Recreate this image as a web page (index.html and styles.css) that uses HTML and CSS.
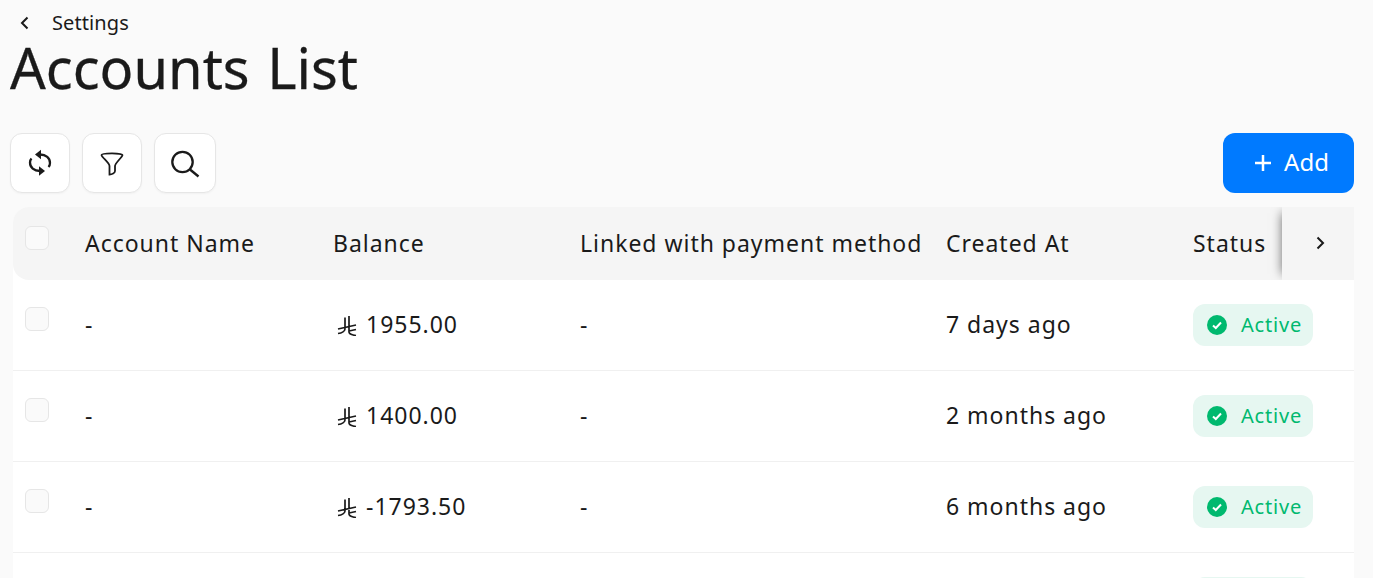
FILE: index.html
```html
<!DOCTYPE html>
<html lang="en">
<head>
  <meta charset="UTF-8" />
  <title>Accounts List</title>
  <link rel="stylesheet" href="styles.css">
</head>
<body>
  <div class="page">
    <a href="#" class="back">
      <svg class="back-icon" width="12" height="14" viewBox="0 0 12 14"><path d="M8.500 1.500 3 7l5.500 5.500" /></svg>
      <span>Settings</span>
    </a>
    <h1>Accounts List</h1>

    <div class="toolbar">
      <button class="btn-icon" aria-label="Refresh">
        <svg width="26" height="28" viewBox="0 0 26 28">
          <path class="ic" d="M13 5.500C19 5.500 23 9 23 14C23 15.500 22.500 17 21.500 18" />
          <path class="ic-fill" d="M8 5.500 14 .8V10.200Z" />
          <path class="ic" d="M13 22C7 22 3 18.500 3 13.500C3 12 3.500 10.500 4.500 9.500" />
          <path class="ic-fill" d="M18 22 12 17.300V26.700Z" />
        </svg>
      </button>
      <button class="btn-icon" aria-label="Filter">
        <svg width="26" height="28" viewBox="0 0 26 28">
          <path class="ic-thin" d="M2.500 6C2.500 3.800 23.500 3.800 23.500 6C23.500 8 16 14 16 17V22C16 24 13 25.500 10.500 25.500V17C10.500 14 2.500 8 2.500 6Z" />
        </svg>
      </button>
      <button class="btn-icon btn-wide" aria-label="Search">
        <svg width="30" height="30" viewBox="0 0 30 30">
          <circle class="ic" cx="12.500" cy="14" r="10.200" />
          <path class="ic" d="M20 21.500 28.500 28.500" />
        </svg>
      </button>
      <button class="btn-add">
        <svg width="18" height="18" viewBox="0 0 18 18"><path d="M9 1v16M1 9h16" /></svg>
        <span>Add</span>
      </button>
    </div>

    <div class="table-wrap">
      <table>
        <colgroup>
          <col class="col-check" />
          <col class="col-name" />
          <col class="col-std" />
          <col class="col-linked" />
          <col class="col-std" />
          <col />
        </colgroup>
        <thead>
          <tr>
            <th><span class="check"></span></th>
            <th>Account Name</th>
            <th>Balance</th>
            <th>Linked with payment method</th>
            <th>Created At</th>
            <th>Status</th>
          </tr>
        </thead>
        <tbody>
          <tr>
            <td><span class="check"></span></td>
            <td>-</td>
            <td><svg class="riyal" width="20" height="20" viewBox="0 0 20 20"><path d="M8 1.500V13C8 15 5 17 1 17.500M12 0V16C12 18 15 19 19 19.500M1 13 19 9M12 15 19 13.500" /></svg>1955.00</td>
            <td>-</td>
            <td>7 days ago</td>
            <td><span class="badge"><svg width="20" height="20" viewBox="0 0 20 20"><circle cx="10" cy="10" r="10" /><path d="M6 10.500 8.800 13 14 7.500" /></svg><span>Active</span></span></td>
          </tr>
          <tr>
            <td><span class="check"></span></td>
            <td>-</td>
            <td><svg class="riyal" width="20" height="20" viewBox="0 0 20 20"><path d="M8 1.500V13C8 15 5 17 1 17.500M12 0V16C12 18 15 19 19 19.500M1 13 19 9M12 15 19 13.500" /></svg>1400.00</td>
            <td>-</td>
            <td>2 months ago</td>
            <td><span class="badge"><svg width="20" height="20" viewBox="0 0 20 20"><circle cx="10" cy="10" r="10" /><path d="M6 10.500 8.800 13 14 7.500" /></svg><span>Active</span></span></td>
          </tr>
          <tr>
            <td><span class="check"></span></td>
            <td>-</td>
            <td><svg class="riyal" width="20" height="20" viewBox="0 0 20 20"><path d="M8 1.500V13C8 15 5 17 1 17.500M12 0V16C12 18 15 19 19 19.500M1 13 19 9M12 15 19 13.500" /></svg>-1793.50</td>
            <td>-</td>
            <td>6 months ago</td>
            <td><span class="badge"><svg width="20" height="20" viewBox="0 0 20 20"><circle cx="10" cy="10" r="10" /><path d="M6 10.500 8.800 13 14 7.500" /></svg><span>Active</span></span></td>
          </tr>
          <tr>
            <td><span class="check"></span></td>
            <td></td>
            <td></td>
            <td></td>
            <td></td>
            <td><span class="badge"></span></td>
          </tr>
        </tbody>
      </table>
      <button class="scroll-next" aria-label="Next">
        <svg width="12" height="14" viewBox="0 0 12 14"><path d="M3.500 1.500 9 7l-5.500 5.500" /></svg>
      </button>
    </div>
  </div>
</body>
</html>
```

FILE: styles.css
```css
html, body {
  margin: 0;
  height: 100%;
  overflow: hidden;
}
body {
  background: #fafafa;
  font-family: "Noto Sans", sans-serif;
  color: #1a1a1a;
}
.page {
  height: 100vh;
  box-sizing: border-box;
  overflow: hidden;
  padding: 10px 19px 0 10px;
}
.back {
  display: flex;
  align-items: center;
  gap: 21px;
  padding-left: 9px;
  height: 25px;
  font-size: 20px;
  letter-spacing: 0.1px;
  color: #1a1a1a;
  text-decoration: none;
}
.back-icon path, .scroll-next path {
  fill: none;
  stroke: #1a1a1a;
  stroke-width: 2;
}
h1 {
  margin: 0;
  font-size: 56px;
  font-weight: 400;
  line-height: 64px;
  word-spacing: 3px;
  -webkit-text-stroke: 0.3px #1a1a1a;
}
.toolbar {
  display: flex;
  gap: 12px;
  margin-top: 34px;
}
.btn-icon {
  width: 60px;
  height: 60px;
  padding: 0;
  display: flex;
  align-items: center;
  justify-content: center;
  background: #fff;
  border: 1px solid #e6e6e6;
  border-radius: 12px;
  box-shadow: 0 1px 2px rgba(0, 0, 0, 0.04);
}
.btn-wide {
  width: 62px;
}
.ic, .ic-thin {
  fill: none;
  stroke: #1a1a1a;
  stroke-width: 2.300;
}
.ic-thin {
  stroke-width: 1.800;
}
.ic-fill {
  fill: #1a1a1a;
}
.btn-add {
  margin-left: auto;
  width: 131px;
  height: 60px;
  padding: 0 0 0 6px;
  display: flex;
  align-items: center;
  justify-content: center;
  gap: 12px;
  background: #007aff;
  border: none;
  border-radius: 12px;
  color: #fff;
  font-family: "Noto Sans", sans-serif;
  font-size: 24px;
}
.btn-add span {
  margin-bottom: 3px;
}
.btn-add path {
  stroke: #fff;
  stroke-width: 2.500;
}
.table-wrap {
  position: relative;
  margin: 14px 0 0 3px;
  background: #fff;
  border-top-left-radius: 16px;
}
table {
  width: 100%;
  border-collapse: collapse;
  table-layout: fixed;
  font-size: 23px;
  letter-spacing: 0.98px;
}
.col-check { width: 72px; }
.col-name { width: 248px; }
.col-std { width: 247px; }
.col-linked { width: 366px; }
th {
  height: 71px;
  padding: 0 0 2px;
  background: #f5f5f5;
  font-weight: 400;
  text-align: left;
  white-space: nowrap;
}
th:first-child {
  border-radius: 16px 0 0 16px;
}
td {
  height: 88px;
  padding: 0 0 2px;
  border-bottom: 1px solid #f0f0f0;
}
th:first-child, td:first-child {
  padding-left: 12px;
  vertical-align: top;
}
td:last-child {
  padding-bottom: 0;
  height: 90px;
}
th:first-child .check {
  margin-top: 19px;
}
td:first-child .check {
  margin-top: 27px;
}
.check {
  display: block;
  width: 24px;
  height: 24px;
  box-sizing: border-box;
  background: #fafafa;
  border: 1px solid #e6e6e6;
  border-radius: 6px;
}
.riyal {
  vertical-align: -3px;
  margin: 0 9px 0 4px;
}
.riyal path {
  fill: none;
  stroke: #1a1a1a;
  stroke-width: 1.700;
}
.badge {
  display: inline-flex;
  align-items: center;
  gap: 14px;
  width: 120px;
  height: 42px;
  box-sizing: border-box;
  padding-left: 14px;
  background: #e6f7f1;
  border-radius: 12px;
  color: #00b96f;
  font-size: 20px;
  letter-spacing: 0.8px;
  vertical-align: middle;
}
.badge span {
  margin-bottom: 2px;
}
.badge circle {
  fill: #00b96f;
}
.badge path {
  fill: none;
  stroke: #fff;
  stroke-width: 2;
}
.scroll-next {
  position: absolute;
  top: 0;
  right: 0;
  width: 72px;
  height: 73px;
  padding: 0 0 2px 3px;
  display: flex;
  align-items: center;
  justify-content: center;
  background: #f5f5f5;
  border: none;
  box-shadow: -6px 0 10px -6px rgba(0, 0, 0, 0.55);
  clip-path: inset(0 0 0 -20px);
}
```
